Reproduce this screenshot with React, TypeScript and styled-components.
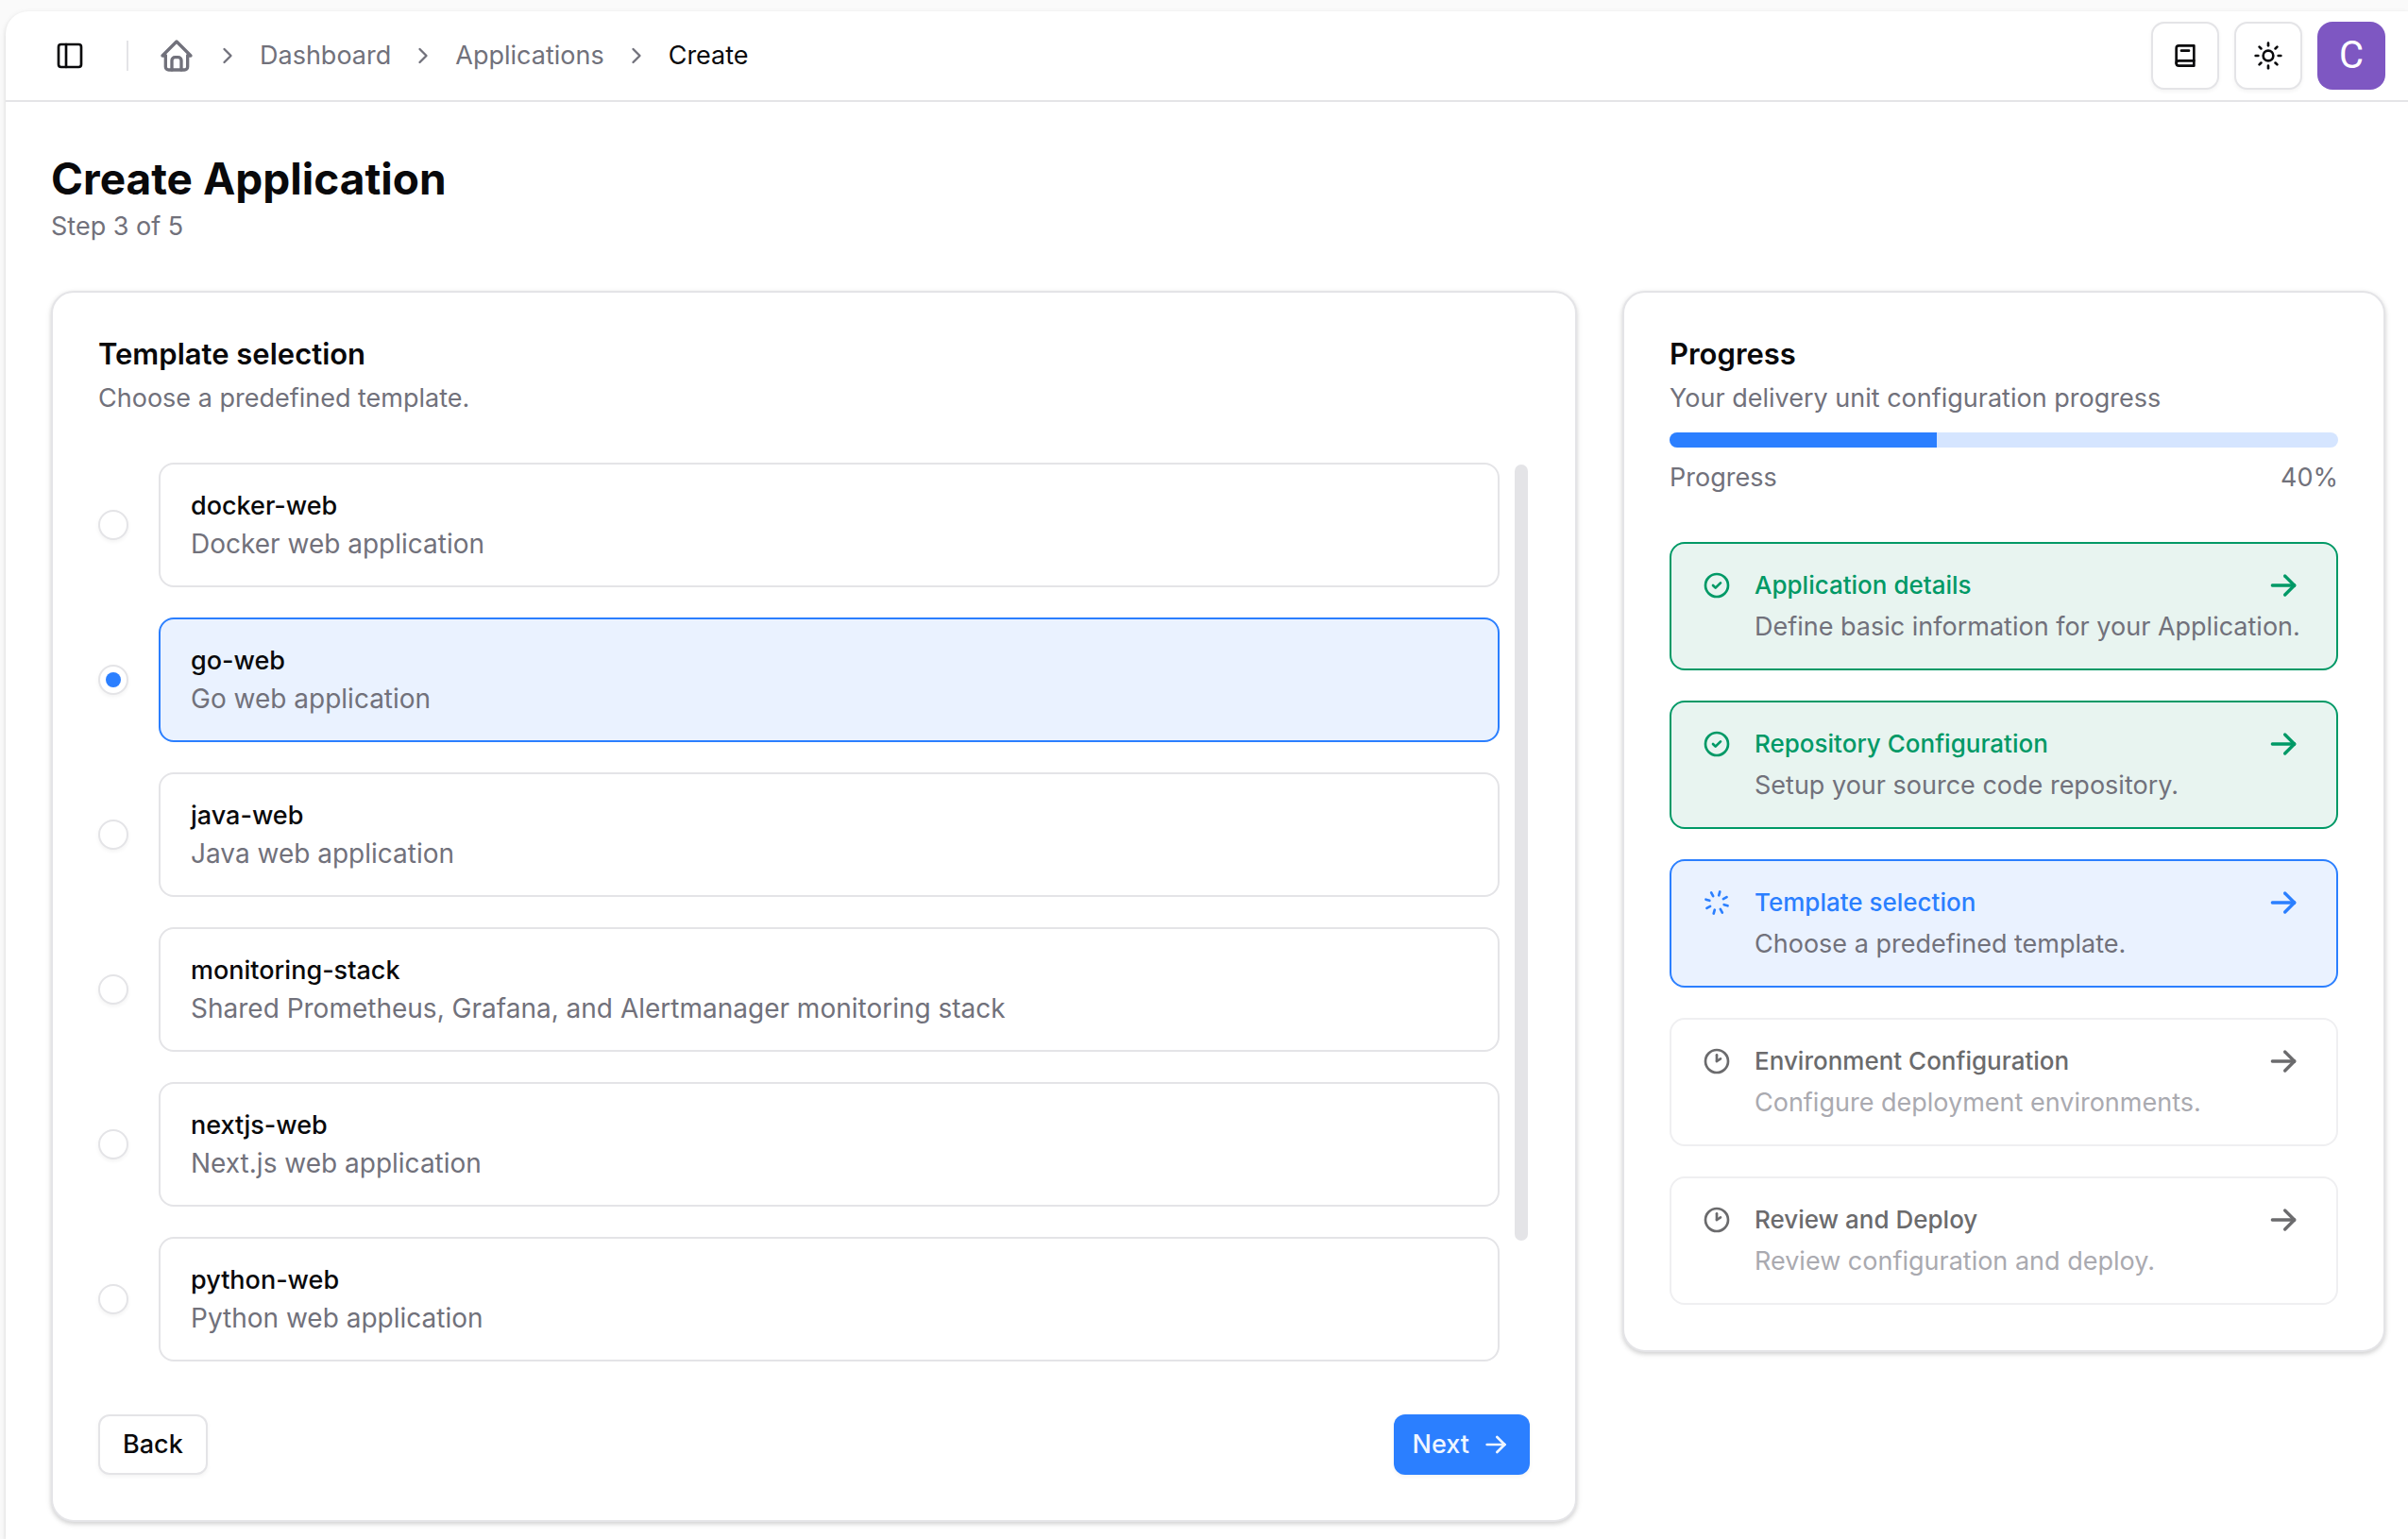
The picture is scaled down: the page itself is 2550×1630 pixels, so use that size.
import React, { useState } from "react";
import styled, { createGlobalStyle, css } from "styled-components";
import { ChevronRight, PanelLeft, Sun } from "lucide-react";

const GlobalStyle = createGlobalStyle`
  *, *::before, *::after { box-sizing: border-box; }
  body {
    margin: 0;
    background: #fafafa;
    color: #09090b;
    font-family: Inter, "Liberation Sans", sans-serif;
    font-size: 27px;
    line-height: 40px;
  }
  h1, h2, h3, p, ol, ul { margin: 0; padding: 0; font: inherit; list-style: none; }
  button { font: inherit; cursor: pointer; }
`;

const Icon = styled.svg.attrs({
  viewBox: "0 0 24 24",
  fill: "none",
  stroke: "currentColor",
  strokeWidth: 2,
  strokeLinecap: "round",
  strokeLinejoin: "round",
  "aria-hidden": true,
})<{ $size: number }>`
  width: ${(p) => p.$size}px;
  height: ${(p) => p.$size}px;
  flex: none;
  display: block;
`;

const HomeIcon = () => (
  <Icon $size={40}>
    <path d="M5 12l-2 0l9 -9l9 9l-2 0" />
    <path d="M5 12v7a2 2 0 0 0 2 2h10a2 2 0 0 0 2 -2v-7" />
    <path d="M9 21v-6a2 2 0 0 1 2 -2h2a2 2 0 0 1 2 2v6" />
  </Icon>
);

const BookIcon = () => (
  <Icon $size={32}>
    <path d="M19 4v16h-12a2 2 0 0 1 -2 -2v-12a2 2 0 0 1 2 -2h12z" />
    <path d="M19 16h-12a2 2 0 0 0 -2 2" />
    <path d="M9 8h6" />
  </Icon>
);

const ArrowIcon = ({ size }: { size: number }) => (
  <Icon $size={size}>
    <path d="M5 12l14 0" />
    <path d="M13 18l6 -6" />
    <path d="M13 6l6 6" />
  </Icon>
);

const CheckIcon = () => (
  <Icon $size={32}>
    <circle cx="12" cy="12" r="9" />
    <path d="M9 12l2 2l4 -4" />
  </Icon>
);

const ClockIcon = () => (
  <Icon $size={32}>
    <circle cx="12" cy="12" r="9" />
    <path d="M12 12l3 -2" />
    <path d="M12 7v5" />
  </Icon>
);

const LoaderIcon = () => (
  <Icon $size={32}>
    <g transform="rotate(16 12 12)">
      <path d="M12 3v3M12 18v3M3 12h3M18 12h3M5.6 5.6l2.2 2.2M16.2 16.2l2.2 2.2M5.6 18.4l2.2 -2.2M16.2 7.8l2.2 -2.2" />
    </g>
  </Icon>
);

const Shell = styled.div`
  min-height: 100vh;
  padding: 12px 0 0 6px;
`;

const Panel = styled.div`
  min-height: calc(100vh - 12px);
  background: #fff;
  border-top-left-radius: 24px;
  box-shadow: 0 2px 6px rgba(0, 0, 0, 0.1), 0 2px 4px rgba(0, 0, 0, 0.06);
`;

const Header = styled.header`
  display: flex;
  align-items: center;
  justify-content: space-between;
  height: 96px;
  padding: 0 24px 0 48px;
  border-bottom: 2px solid #e4e4e7;
`;

const HeaderGroup = styled.div<{ $gap: number }>`
  display: flex;
  align-items: center;
  gap: ${(p) => p.$gap}px;
`;

const SidebarToggle = styled.button`
  display: grid;
  place-items: center;
  width: 40px;
  height: 56px;
  padding: 0;
  border: 0;
  background: none;
  color: #09090b;
`;

const Divider = styled.span`
  width: 2px;
  height: 32px;
  margin-right: -9px;
  background: #e4e4e7;
`;

const Crumbs = styled.ol`
  display: flex;
  align-items: center;
  gap: 20px;
  color: #71717b;

  li { display: flex; align-items: center; }
`;

const CrumbLink = styled.a`
  color: inherit;
  text-decoration: none;
`;

const CurrentCrumb = styled.span`
  color: #09090b;
`;

const IconButton = styled.button`
  display: grid;
  place-items: center;
  width: 72px;
  height: 72px;
  padding: 0;
  border: 2px solid #e4e4e7;
  border-radius: 14px;
  background: #fff;
  color: #09090b;
  box-shadow: 0 2px 4px rgba(0, 0, 0, 0.05);
`;

const Avatar = styled.button`
  width: 72px;
  height: 72px;
  padding: 0;
  border: 0;
  border-radius: 16px;
  background: #7e57c2;
  color: #fff;
  font-family: Roboto, sans-serif;
  font-size: 40px;
`;

const Main = styled.main`
  padding: 52px 24px 18px 48px;
`;

const PageTitle = styled.h1`
  margin-bottom: 2px;
  font-size: 46px;
  font-weight: 700;
  line-height: 58px;
`;

const Muted = styled.p`
  color: #71717b;
`;

const Columns = styled.div`
  display: grid;
  grid-template-columns: 2fr 1fr;
  align-items: start;
  gap: 48px;
  margin-top: 48px;
`;

const Card = styled.section`
  min-width: 0;
  padding: 48px;
  border: 2px solid #e4e4e7;
  border-radius: 24px;
  background: #fff;
  box-shadow: 0 2px 6px rgba(0, 0, 0, 0.1), 0 2px 4px rgba(0, 0, 0, 0.1);
`;

const CardTitle = styled.h2`
  margin-bottom: 10px;
  font-size: 31px;
  font-weight: 600;
  line-height: 34px;
`;

const ScrollArea = styled.div`
  display: flex;
  gap: 12px;
  min-height: 960px;
  margin-top: 48px;
`;

const OptionList = styled.div`
  display: flex;
  flex: 1;
  flex-direction: column;
  gap: 32px;
`;

const ScrollTrack = styled.div`
  width: 20px;
  padding: 2px 2px 2px 4px;
`;

const ScrollThumb = styled.div`
  height: 86%;
  border-radius: 7px;
  background: #e4e4e7;
`;

const OptionRow = styled.div`
  display: flex;
  align-items: center;
  gap: 32px;
`;

const Radio = styled.input`
  appearance: none;
  display: grid;
  place-items: center;
  flex: none;
  width: 32px;
  height: 32px;
  margin: 0;
  border: 2px solid #e4e4e7;
  border-radius: 50%;
  background: #fff;
  box-shadow: 0 2px 4px rgba(0, 0, 0, 0.05);

  &:checked::before {
    content: "";
    width: 16px;
    height: 16px;
    border-radius: 50%;
    background: #2b7fff;
  }
`;

const OptionBox = styled.label<{ $selected: boolean }>`
  display: flex;
  flex: 1;
  flex-direction: column;
  padding: 24px 32px;
  border: 2px solid ${(p) => (p.$selected ? "#2b7fff" : "#e4e4e7")};
  border-radius: 16px;
  background: ${(p) => (p.$selected ? "#eaf2ff" : "#fff")};
  cursor: pointer;
`;

const OptionName = styled.span`
  font-weight: 500;
`;

const OptionText = styled.span`
  color: #71717b;
  font-size: 28px;
`;

const Footer = styled.div`
  display: flex;
  justify-content: space-between;
  margin-top: 48px;
`;

const Button = styled.button<{ $primary?: boolean }>`
  display: flex;
  align-items: center;
  gap: 12px;
  height: 64px;
  padding: 0 24px;
  border: 2px solid #e4e4e7;
  border-radius: 12px;
  background: #fff;
  color: #09090b;
  font-weight: 500;
  box-shadow: 0 2px 4px rgba(0, 0, 0, 0.05);

  ${(p) =>
    p.$primary &&
    css`
      padding: 0 20px;
      border: 0;
      background: #2b7fff;
      color: #eff6ff;
    `}
`;

const ProgressTrack = styled.div`
  height: 16px;
  margin-top: 16px;
  overflow: hidden;
  border-radius: 8px;
  background: #d5e5ff;
`;

const ProgressFill = styled.div`
  height: 100%;
  background: #2b7fff;
`;

const ProgressLabels = styled.div`
  display: flex;
  justify-content: space-between;
  margin-top: 12px;
  color: #71717b;
`;

type StepState = "done" | "active" | "pending";

const tones = {
  done: { line: "#009966", fill: "#e8f4f0", text: "#009966", note: "#71717b" },
  active: { line: "#2b7fff", fill: "#eaf2ff", text: "#2b7fff", note: "#71717b" },
  pending: { line: "#efeff1", fill: "#fff", text: "#6b6b6d", note: "#aaaab0" },
};

const Steps = styled.ol`
  display: flex;
  flex-direction: column;
  gap: 32px;
  margin-top: 48px;
`;

const StepCard = styled.li<{ $state: StepState }>`
  display: grid;
  grid-template-columns: 32px minmax(0, 1fr);
  column-gap: 24px;
  row-gap: 4px;
  padding: 24px 32px;
  border: 2px solid ${(p) => tones[p.$state].line};
  border-radius: 16px;
  background: ${(p) => tones[p.$state].fill};
  color: ${(p) => tones[p.$state].text};
`;

const StepIcon = styled.span`
  display: flex;
  align-items: center;
`;

const StepHead = styled.div`
  display: flex;
  justify-content: space-between;
  padding-right: 4px;
`;

const StepName = styled.h3`
  font-size: 26px;
  font-weight: 500;
`;

const StepNote = styled.p<{ $state: StepState }>`
  grid-column: 2;
  color: ${(p) => tones[p.$state].note};
  white-space: nowrap;
`;

const templates = [
  { name: "docker-web", text: "Docker web application" },
  { name: "go-web", text: "Go web application" },
  { name: "java-web", text: "Java web application" },
  { name: "monitoring-stack", text: "Shared Prometheus, Grafana, and Alertmanager monitoring stack" },
  { name: "nextjs-web", text: "Next.js web application" },
  { name: "python-web", text: "Python web application" },
];

const steps: { name: string; note: string; state: StepState }[] = [
  { name: "Application details", note: "Define basic information for your Application.", state: "done" },
  { name: "Repository Configuration", note: "Setup your source code repository.", state: "done" },
  { name: "Template selection", note: "Choose a predefined template.", state: "active" },
  { name: "Environment Configuration", note: "Configure deployment environments.", state: "pending" },
  { name: "Review and Deploy", note: "Review configuration and deploy.", state: "pending" },
];

const stepIcons = { done: CheckIcon, active: LoaderIcon, pending: ClockIcon };

export default function App() {
  const [selected, setSelected] = useState("go-web");
  const percent = 40;

  return (
    <>
      <GlobalStyle />
      <Shell>
        <Panel>
          <Header>
            <HeaderGroup $gap={40}>
              <SidebarToggle aria-label="Toggle sidebar">
                <PanelLeft size={32} />
              </SidebarToggle>
              <Divider />
              <nav aria-label="Breadcrumb">
                <Crumbs>
                  <li><CrumbLink href="#" aria-label="Home"><HomeIcon /></CrumbLink></li>
                  <li><ChevronRight size={28} /></li>
                  <li><CrumbLink href="#">Dashboard</CrumbLink></li>
                  <li><ChevronRight size={28} /></li>
                  <li><CrumbLink href="#">Applications</CrumbLink></li>
                  <li><ChevronRight size={28} /></li>
                  <li><CurrentCrumb aria-current="page">Create</CurrentCrumb></li>
                </Crumbs>
              </nav>
            </HeaderGroup>
            <HeaderGroup $gap={16}>
              <IconButton aria-label="Documentation"><BookIcon /></IconButton>
              <IconButton aria-label="Theme"><Sun size={32} /></IconButton>
              <Avatar>C</Avatar>
            </HeaderGroup>
          </Header>

          <Main>
            <PageTitle>Create Application</PageTitle>
            <Muted>Step 3 of 5</Muted>

            <Columns>
              <Card>
                <CardTitle>Template selection</CardTitle>
                <Muted>Choose a predefined template.</Muted>
                <ScrollArea>
                  <OptionList role="radiogroup">
                    {templates.map((t) => (
                      <OptionRow key={t.name}>
                        <Radio
                          type="radio"
                          name="template"
                          id={t.name}
                          checked={selected === t.name}
                          onChange={() => setSelected(t.name)}
                        />
                        <OptionBox htmlFor={t.name} $selected={selected === t.name}>
                          <OptionName>{t.name}</OptionName>
                          <OptionText>{t.text}</OptionText>
                        </OptionBox>
                      </OptionRow>
                    ))}
                  </OptionList>
                  <ScrollTrack>
                    <ScrollThumb />
                  </ScrollTrack>
                </ScrollArea>
                <Footer>
                  <Button>Back</Button>
                  <Button $primary>
                    Next
                    <ArrowIcon size={32} />
                  </Button>
                </Footer>
              </Card>

              <Card>
                <CardTitle>Progress</CardTitle>
                <Muted>Your delivery unit configuration progress</Muted>
                <ProgressTrack role="progressbar" aria-label="Progress" aria-valuenow={percent}>
                  <ProgressFill style={{ width: `${percent}%` }} />
                </ProgressTrack>
                <ProgressLabels>
                  <span>Progress</span>
                  <span>{percent}%</span>
                </ProgressLabels>
                <Steps>
                  {steps.map((s) => {
                    const StateIcon = stepIcons[s.state];
                    return (
                      <StepCard key={s.name} $state={s.state}>
                        <StepIcon><StateIcon /></StepIcon>
                        <StepHead>
                          <StepName>{s.name}</StepName>
                          <ArrowIcon size={40} />
                        </StepHead>
                        <StepNote $state={s.state}>{s.note}</StepNote>
                      </StepCard>
                    );
                  })}
                </Steps>
              </Card>
            </Columns>
          </Main>
        </Panel>
      </Shell>
    </>
  );
}
